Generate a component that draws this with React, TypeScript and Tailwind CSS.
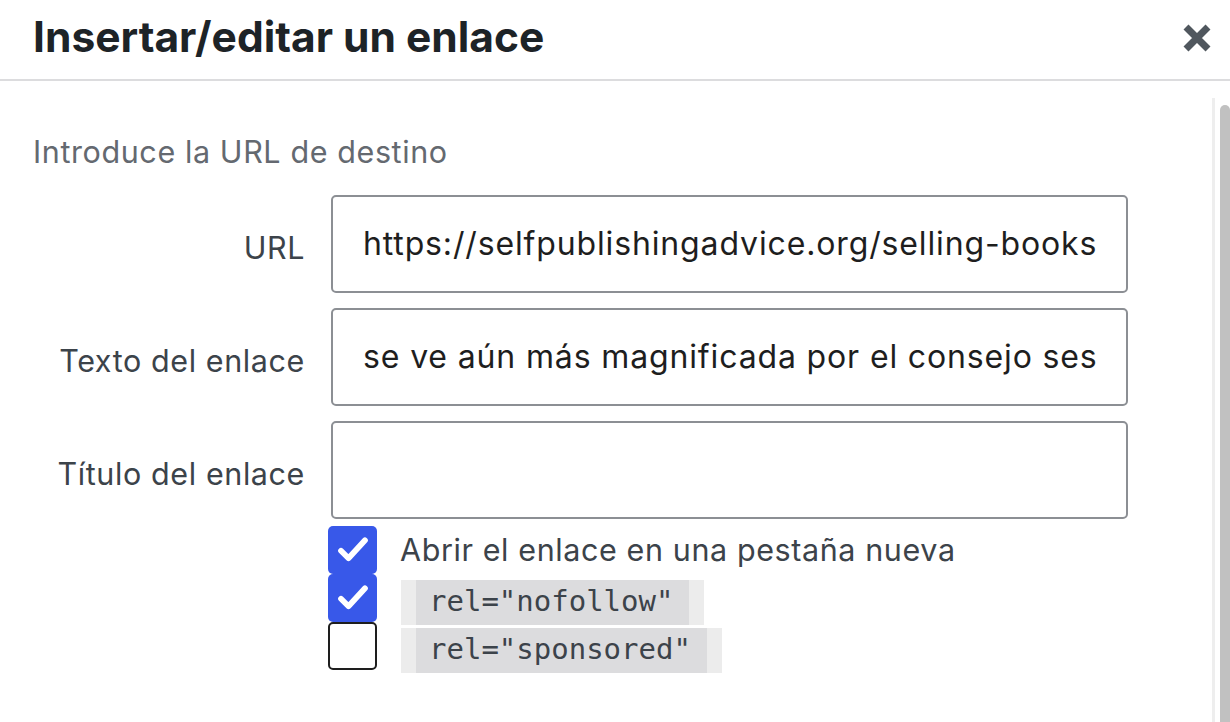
import React from 'react';

const sans = "font-['Inter','Noto_Sans',sans-serif]";

function CheckBox({ checked }: { checked: boolean }) {
  return (
    <span
      className={
        'flex h-[48px] w-[49px] shrink-0 items-center justify-center rounded-[5px] ' +
        (checked ? 'bg-[#3858e9]' : 'border-2 border-[#1e1e1e] bg-white')
      }
    >
      {checked && (
        <svg width="36" height="36" viewBox="0 0 24 24" fill="none">
          <path d="M4 12.5l5 5L20 5.5" stroke="white" strokeWidth="3.8" strokeLinecap="round" strokeLinejoin="round" />
        </svg>
      )}
    </span>
  );
}

function Field({ label, value }: { label: string; value?: string }) {
  return (
    <div className="flex items-center">
      <label className="w-[305px] pt-[8px] text-right text-[30.5px] tracking-[0.6px] text-[#3c434a]">{label}</label>
      <div className="ml-[26px] flex h-[98px] w-[797px] items-center rounded-[5px] border-2 border-[#8c8f94] pl-[30px] pr-[28px]">
        <div className="flex-1 overflow-hidden whitespace-nowrap text-[32px] tracking-[0.86px] text-[#1e1e1e]">{value}</div>
      </div>
    </div>
  );
}

function Rel({ text }: { text: string }) {
  return (
    <span className="mt-[8px] inline-flex h-[45px] items-center bg-[#ececec] px-[15px]">
      <code className="flex h-full items-center bg-[#dcdcde] pl-[13px] pr-[16px] font-['DejaVu_Sans_Mono',monospace] text-[29px] text-[#3c434a]">
        {text}
      </code>
    </span>
  );
}

export default function App() {
  return (
    <div className={`h-[722px] w-[1230px] overflow-hidden bg-white ${sans}`}>
      <header className="flex h-[81px] items-center justify-between border-b-2 border-[#dcdcde] pl-[33px] pr-[19px]">
        <h1 className="pb-[6px] text-[42.5px] font-bold text-[#1d2327]">Insertar/editar un enlace</h1>
        <svg width="28" height="28" viewBox="0 0 28 28" className="mb-[4px]">
          <path d="M3 3L25 25M25 3L3 25" stroke="#50575e" strokeWidth="7" />
        </svg>
      </header>
      <div className="flex">
        <div className="flex-1 pt-[52px]">
          <p className="pl-[33px] text-[30.5px] leading-[38px] tracking-[0.6px] text-[#646970]">Introduce la URL de destino</p>
          <div className="mt-[24px] flex flex-col gap-[15px] pb-[2px]">
            <Field label="URL" value="https://selfpublishingadvice.org/selling-books" />
            <Field label="Texto del enlace" value="se ve aún más magnificada por el consejo sesudo" />
            <Field label="Título del enlace" />
          </div>
          <div className="ml-[328px] mt-[5px] flex flex-col">
            <div className="flex h-[48px] items-center gap-[23px]">
              <CheckBox checked />
              <span className="text-[30.5px] tracking-[0.6px] text-[#3c434a]">Abrir el enlace en una pestaña nueva</span>
            </div>
            <div className="flex h-[48px] items-center gap-[24px]">
              <CheckBox checked />
              <Rel text={'rel="nofollow"'} />
            </div>
            <div className="flex h-[48px] items-center gap-[24px]">
              <CheckBox checked={false} />
              <Rel text={'rel="sponsored"'} />
            </div>
          </div>
        </div>
        <div className="mt-[17px] flex h-[660px] w-[18px] gap-[5px]">
          <div className="w-[3px] bg-[#eeeeee]" />
          <div className="mt-[7px] w-[10px] rounded-t-[5px] bg-[#c1c1c1]" />
        </div>
      </div>
    </div>
  );
}
